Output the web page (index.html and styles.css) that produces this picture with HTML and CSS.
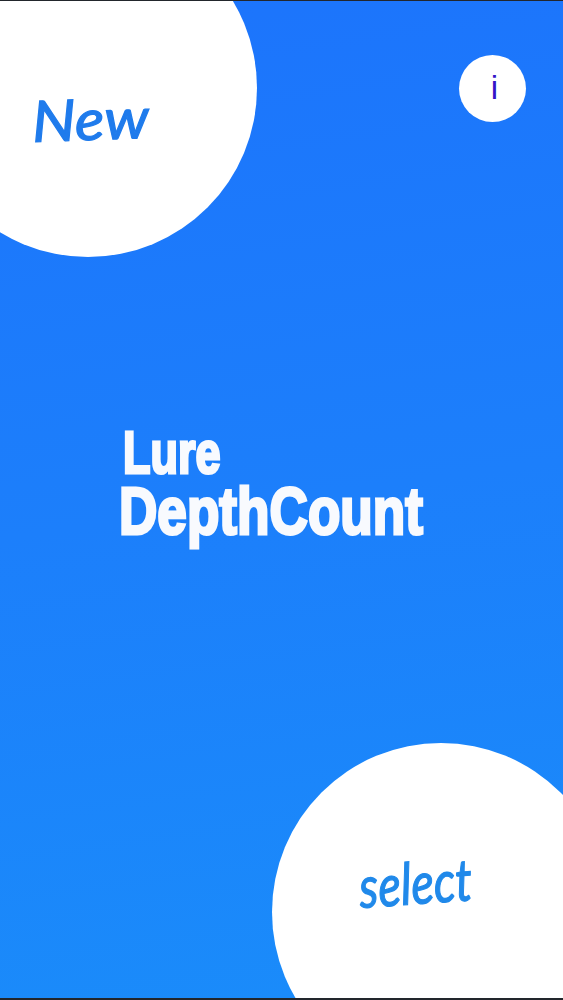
FILE: index.html
```html
<!DOCTYPE html>
<html lang="en">
<head>
  <meta charset="UTF-8" />
  <meta name="viewport" content="width=device-width, initial-scale=1.0"/>
  <title>Lure DepthCount</title>
  <link rel="stylesheet" href="styles.css">
</head>
<body>
  <div class="screen">
    <!-- Corner buttons -->
    <a class="corner corner-new" href="#"><span class="new-label">New</span></a>
    <a class="corner corner-select" href="#"><span class="select-label">select</span></a>
    <a class="info-btn" href="#">i</a>

    <!-- App title -->
    <h1 class="title">
      <span class="title-lure">Lure</span>
      <span class="title-depth">DepthCount</span>
    </h1>
  </div>
</body>
</html>
```

FILE: styles.css
```css
html, body {
  margin: 0;
  height: 100%;
}

body {
  background: #22262c;
  font-family: "Liberation Sans", Arial, sans-serif;
}

.screen {
  position: relative;
  height: 997px;
  margin-top: 1px;
  overflow: hidden;
  background: linear-gradient(172deg, #1c74fc 0%, #1c7ffb 50%, #1a8cfa 100%);
  display: flex;
  align-items: center;
  justify-content: center;
}

.corner {
  position: absolute;
  width: 338px;
  height: 338px;
  border-radius: 50%;
  background: #fff;
  text-decoration: none;
}

.corner-new {
  left: -81px;
  top: -82px;
}

.corner-select {
  left: 272px;
  top: 742px;
}

.new-label,
.select-label {
  position: absolute;
  font-family: "Lato", "DejaVu Sans", sans-serif;
  font-style: italic;
  white-space: nowrap;
}

.new-label {
  left: 113px;
  top: 166px;
  font-size: 57px;
  line-height: 70px;
  color: #1f7bec;
  -webkit-text-stroke: 1.2px #1f7bec;
  transform: rotate(-2deg) scaleX(1.08);
  transform-origin: left center;
}

.select-label {
  left: 87px;
  top: 108px;
  font-size: 58px;
  line-height: 70px;
  color: #2089ea;
  -webkit-text-stroke: 1.2px #2089ea;
  transform: rotate(-4deg) scaleX(0.815);
  transform-origin: left center;
}

.info-btn {
  position: absolute;
  left: 459px;
  top: 54px;
  width: 67px;
  height: 67px;
  padding-left: 4px;
  box-sizing: border-box;
  border-radius: 50%;
  background: #fff;
  color: #3414c8;
  font-size: 33px;
  line-height: 65px;
  text-align: center;
  text-decoration: none;
}

.title {
  margin: -32px 0 0 -22px;
  width: 304px;
  color: #f8fafe;
  font-size: 60px;
  font-weight: bold;
  line-height: 1;
}

.title span {
  display: block;
  white-space: nowrap;
  transform-origin: left center;
  -webkit-text-stroke: 3px #f8fafe;
}

.title-lure {
  margin-left: 4px;
  font-size: 60px;
  height: 54px;
  line-height: 54px;
  transform: scaleX(0.75);
}

.title-depth {
  font-size: 66px;
  height: 62px;
  line-height: 62px;
  transform: scaleX(0.805);
}
```
